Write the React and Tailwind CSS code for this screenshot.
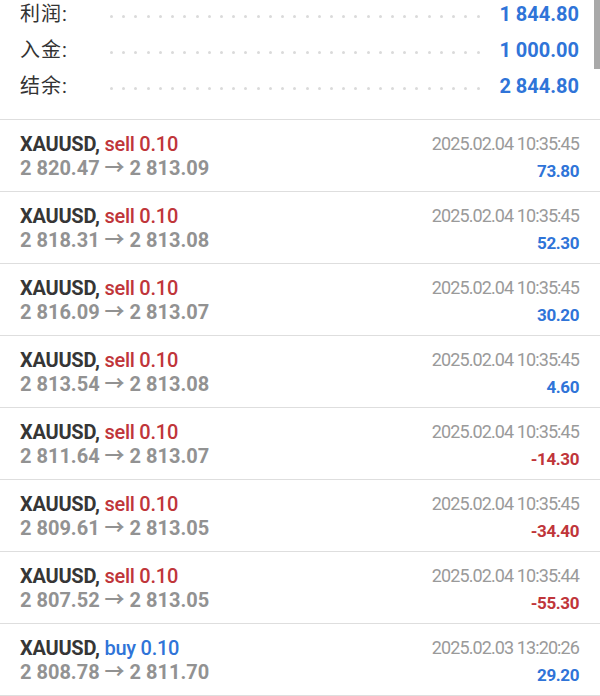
import React from "react";

const summary = [
  { label: "利润:", value: "1 844.80" },
  { label: "入金:", value: "1 000.00" },
  { label: "结余:", value: "2 844.80" },
];

const deals = [
  { side: "sell", open: "2 820.47", close: "2 813.09", time: "2025.02.04 10:35:45", profit: "73.80" },
  { side: "sell", open: "2 818.31", close: "2 813.08", time: "2025.02.04 10:35:45", profit: "52.30" },
  { side: "sell", open: "2 816.09", close: "2 813.07", time: "2025.02.04 10:35:45", profit: "30.20" },
  { side: "sell", open: "2 813.54", close: "2 813.08", time: "2025.02.04 10:35:45", profit: "4.60" },
  { side: "sell", open: "2 811.64", close: "2 813.07", time: "2025.02.04 10:35:45", profit: "-14.30" },
  { side: "sell", open: "2 809.61", close: "2 813.05", time: "2025.02.04 10:35:45", profit: "-34.40" },
  { side: "sell", open: "2 807.52", close: "2 813.05", time: "2025.02.04 10:35:44", profit: "-55.30" },
  { side: "buy", open: "2 808.78", close: "2 811.70", time: "2025.02.03 13:20:26", profit: "29.20" },
];

const dots = Array.from({ length: 31 });

export default function App() {
  return (
    <div
      className="relative w-[600px] h-[696px] overflow-hidden bg-white"
      style={{ fontFamily: "Roboto, 'Noto Sans CJK SC', sans-serif" }}
    >
      {/* scroll thumb */}
      <div className="absolute right-0 top-0 w-[6px] h-[69px] bg-[#a9a9a9]" />

      <div className="h-[120px] pl-5 pr-[21px] flex flex-col gap-2 border-b border-[#dedede]">
        {summary.map((row) => (
          <div key={row.label} className="flex items-center h-7">
            <div className="w-[90px] text-[20px] text-[#333] tracking-[1px]">{row.label}</div>
            <div className="w-[370px] flex justify-between items-center pt-1">
              {dots.map((_, i) => (
                <span key={i} className="w-[3px] h-[3px] rounded-full bg-[#dadada]" />
              ))}
            </div>
            <div className="flex-1 text-right text-[20px] font-bold text-[#2f74d8]">
              {row.value}
            </div>
          </div>
        ))}
      </div>

      {deals.map((d, i) => (
        <div
          key={i}
          className="h-[72px] flex justify-between pl-5 pr-[21px] pt-3 border-b border-[#dedede]"
        >
          <div className="flex flex-col">
            <div className="leading-6 text-[20px] tracking-[-0.25px]">
              <span className="font-bold text-[#363636]">XAUUSD,</span>{" "}
              <span className={d.side === "sell" ? "font-medium text-[#c0353a]" : "font-medium text-[#2f74d8]"}>
                {d.side} 0.10
              </span>
            </div>
            <div className="leading-6 text-[20px] font-bold text-[#929292]">
              {d.open} → {d.close}
            </div>
          </div>
          <div className="flex flex-col items-end">
            <div className="leading-6 text-[18px] text-[#9a9a9a] tracking-[-0.9px]">{d.time}</div>
            <div
              className={
                "leading-6 mt-[3px] text-[17px] font-bold tracking-[-0.4px] " +
                (d.profit.startsWith("-") ? "text-[#c0353a]" : "text-[#2f74d8]")
              }
            >
              {d.profit}
            </div>
          </div>
        </div>
      ))}
    </div>
  );
}
